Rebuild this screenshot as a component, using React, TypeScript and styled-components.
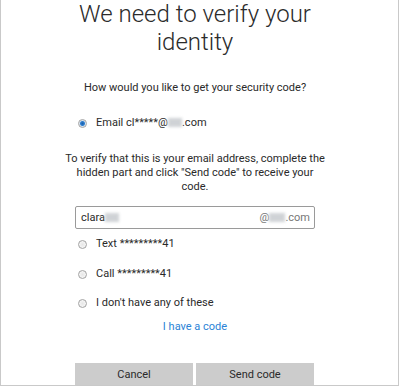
import styled, { createGlobalStyle } from "styled-components";

const GlobalStyle = createGlobalStyle`
  html, body {
    margin: 0;
    padding: 0;
    background: #ffffff;
  }
  body {
    font-family: Roboto, "Open Sans", "Liberation Sans", sans-serif;
    color: #2a2a2a;
  }
`;

const Frame = styled.div`
  box-sizing: border-box;
  width: 399px;
  height: 386px;
  border: 1px solid #c9c9c9;
  border-top: none;
  overflow: hidden;
`;

const Column = styled.main`
  width: 240px;
  margin-left: 74px;
  display: flex;
  flex-direction: column;
`;

const Title = styled.h1`
  margin: 0;
  font-size: 24px;
  line-height: 28px;
  font-weight: 300;
  text-align: center;
  color: #2b2b2b;
`;

const Prompt = styled.p`
  margin: 25px 0 0;
  font-size: 11px;
  line-height: 14px;
  text-align: center;
`;

const Option = styled.label<{ gap?: number }>`
  display: flex;
  align-items: center;
  gap: 9px;
  margin-top: ${(props) => props.gap ?? 16}px;
  padding-left: 3px;
  font-size: 11px;
  line-height: 14px;
`;

const Radio = styled.span<{ checked?: boolean }>`
  box-sizing: border-box;
  width: 9px;
  height: 9px;
  border-radius: 50%;
  border: 1px solid #a5a5a5;
  background: ${(props) =>
    props.checked
      ? "radial-gradient(circle, #1c5fa8 0, #2f7fd1 2px, #d7e4f0 3px, #eeeeee 4px)"
      : "radial-gradient(circle, #e6e6e6 0, #f4f4f4 3px, #dcdcdc 4px)"};
  flex-shrink: 0;
`;

const Blur = styled.span<{ w: number }>`
  display: inline-block;
  width: ${(props) => props.w}px;
  height: 9px;
  vertical-align: -1px;
  background: #c4c8cc;
  filter: blur(1.5px);
  opacity: 0.8;
`;

const Note = styled.p`
  margin: 22px -13px 0;
  font-size: 11px;
  line-height: 14px;
  text-align: center;
`;

const Field = styled.div`
  box-sizing: border-box;
  margin-top: 12px;
  height: 23px;
  border: 1px solid #9a9a9a;
  border-radius: 2px;
  display: flex;
  align-items: center;
  justify-content: space-between;
  padding: 0 4px 0 5px;
  font-size: 11px;
`;

const Domain = styled.span`
  color: #777;
`;

const Link = styled.a`
  margin-top: 10px;
  text-align: center;
  font-size: 11px;
  line-height: 14px;
  color: #2a83d6;
  text-decoration: none;
`;

const Buttons = styled.div`
  margin-top: 29px;
  display: grid;
  grid-template-columns: 118px 118px;
  gap: 3px;
`;

const Button = styled.button`
  height: 22px;
  border: none;
  background: #cccccc;
  font-family: Roboto, "Open Sans", "Liberation Sans", sans-serif;
  font-size: 11px;
  color: #2a2a2a;
  padding: 0;
`;

export default function App() {
  return (
    <Frame>
      <GlobalStyle />
      <Column>
        <Title>We need to verify your identity</Title>
        <Prompt>How would you like to get your security code?</Prompt>
        <Option gap={21}>
          <Radio checked />
          <span>
            Email cl*****@<Blur w={14} />.com
          </span>
        </Option>
        <Note>
          To verify that this is your email address, complete the hidden part
          and click "Send code" to receive your code.
        </Note>
        <Field>
          <span>
            clara<Blur w={14} />
          </span>
          <Domain>
            @<Blur w={16} />.com
          </Domain>
        </Field>
        <Option gap={8}>
          <Radio />
          <span>Text *********41</span>
        </Option>
        <Option>
          <Radio />
          <span>Call *********41</span>
        </Option>
        <Option gap={15}>
          <Radio />
          <span>I don't have any of these</span>
        </Option>
        <Link href="#">I have a code</Link>
        <Buttons>
          <Button>Cancel</Button>
          <Button>Send code</Button>
        </Buttons>
      </Column>
    </Frame>
  );
}
